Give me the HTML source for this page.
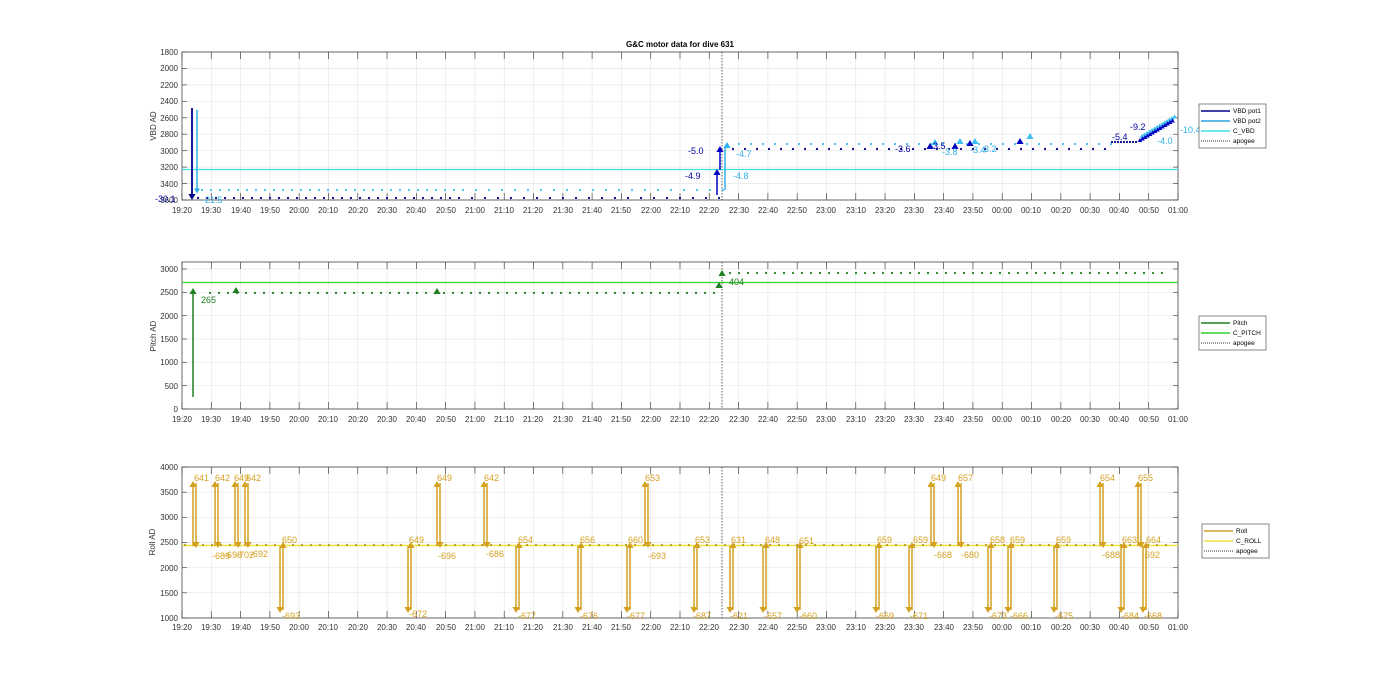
<!DOCTYPE html>
<html><head><meta charset="utf-8"><style>
body{margin:0;background:#fff;width:1400px;height:693px;overflow:hidden}
svg{font-family:"Liberation Sans",sans-serif}
.yl{font-size:8px;fill:#333;text-anchor:end}
.xl{font-size:8px;fill:#333;text-anchor:middle}
</style></head><body>
<svg id="s" width="1400" height="693" viewBox="0 0 1400 693">
<rect width="1400" height="693" fill="#fff"/>
<g id="grid"></g>
<g id="data"></g>
<text x="680" y="47" font-size="8" font-weight="bold" text-anchor="middle" fill="#000">G&amp;C motor data for dive 631</text>
<g class="yl">
<text x="178" y="55">1800</text><text x="178" y="71">2000</text><text x="178" y="88">2200</text><text x="178" y="104">2400</text><text x="178" y="121">2600</text><text x="178" y="137">2800</text><text x="178" y="154">3000</text><text x="178" y="170">3200</text><text x="178" y="187">3400</text><text x="178" y="203">3600</text>
<text x="178" y="272">3000</text><text x="178" y="295">2500</text><text x="178" y="319">2000</text><text x="178" y="342">1500</text><text x="178" y="365">1000</text><text x="178" y="389">500</text><text x="178" y="412">0</text>
<text x="178" y="470">4000</text><text x="178" y="495">3500</text><text x="178" y="520">3000</text><text x="178" y="545">2500</text><text x="178" y="571">2000</text><text x="178" y="596">1500</text><text x="178" y="621">1000</text>
</g>
<text transform="translate(156,126) rotate(-90)" font-size="8" text-anchor="middle" fill="#333">VBD AD</text>
<text transform="translate(156,336) rotate(-90)" font-size="8" text-anchor="middle" fill="#333">Pitch AD</text>
<text transform="translate(155,542) rotate(-90)" font-size="8" text-anchor="middle" fill="#333">Roll AD</text>
<g class="xl">
<text x="182" y="213">19:20</text><text x="211" y="213">19:30</text><text x="241" y="213">19:40</text><text x="270" y="213">19:50</text><text x="299" y="213">20:00</text><text x="328" y="213">20:10</text><text x="358" y="213">20:20</text><text x="387" y="213">20:30</text><text x="416" y="213">20:40</text><text x="446" y="213">20:50</text><text x="475" y="213">21:00</text><text x="504" y="213">21:10</text><text x="533" y="213">21:20</text><text x="563" y="213">21:30</text><text x="592" y="213">21:40</text><text x="621" y="213">21:50</text><text x="651" y="213">22:00</text><text x="680" y="213">22:10</text><text x="709" y="213">22:20</text><text x="739" y="213">22:30</text><text x="768" y="213">22:40</text><text x="797" y="213">22:50</text><text x="826" y="213">23:00</text><text x="856" y="213">23:10</text><text x="885" y="213">23:20</text><text x="914" y="213">23:30</text><text x="944" y="213">23:40</text><text x="973" y="213">23:50</text><text x="1002" y="213">00:00</text><text x="1031" y="213">00:10</text><text x="1061" y="213">00:20</text><text x="1090" y="213">00:30</text><text x="1119" y="213">00:40</text><text x="1149" y="213">00:50</text><text x="1178" y="213">01:00</text>
</g>
<g class="xl" transform="translate(0,209)">
<text x="182" y="213">19:20</text><text x="211" y="213">19:30</text><text x="241" y="213">19:40</text><text x="270" y="213">19:50</text><text x="299" y="213">20:00</text><text x="328" y="213">20:10</text><text x="358" y="213">20:20</text><text x="387" y="213">20:30</text><text x="416" y="213">20:40</text><text x="446" y="213">20:50</text><text x="475" y="213">21:00</text><text x="504" y="213">21:10</text><text x="533" y="213">21:20</text><text x="563" y="213">21:30</text><text x="592" y="213">21:40</text><text x="621" y="213">21:50</text><text x="651" y="213">22:00</text><text x="680" y="213">22:10</text><text x="709" y="213">22:20</text><text x="739" y="213">22:30</text><text x="768" y="213">22:40</text><text x="797" y="213">22:50</text><text x="826" y="213">23:00</text><text x="856" y="213">23:10</text><text x="885" y="213">23:20</text><text x="914" y="213">23:30</text><text x="944" y="213">23:40</text><text x="973" y="213">23:50</text><text x="1002" y="213">00:00</text><text x="1031" y="213">00:10</text><text x="1061" y="213">00:20</text><text x="1090" y="213">00:30</text><text x="1119" y="213">00:40</text><text x="1149" y="213">00:50</text><text x="1178" y="213">01:00</text>
</g>
<g class="xl" transform="translate(0,417)">
<text x="182" y="213">19:20</text><text x="211" y="213">19:30</text><text x="241" y="213">19:40</text><text x="270" y="213">19:50</text><text x="299" y="213">20:00</text><text x="328" y="213">20:10</text><text x="358" y="213">20:20</text><text x="387" y="213">20:30</text><text x="416" y="213">20:40</text><text x="446" y="213">20:50</text><text x="475" y="213">21:00</text><text x="504" y="213">21:10</text><text x="533" y="213">21:20</text><text x="563" y="213">21:30</text><text x="592" y="213">21:40</text><text x="621" y="213">21:50</text><text x="651" y="213">22:00</text><text x="680" y="213">22:10</text><text x="709" y="213">22:20</text><text x="739" y="213">22:30</text><text x="768" y="213">22:40</text><text x="797" y="213">22:50</text><text x="826" y="213">23:00</text><text x="856" y="213">23:10</text><text x="885" y="213">23:20</text><text x="914" y="213">23:30</text><text x="944" y="213">23:40</text><text x="973" y="213">23:50</text><text x="1002" y="213">00:00</text><text x="1031" y="213">00:10</text><text x="1061" y="213">00:20</text><text x="1090" y="213">00:30</text><text x="1119" y="213">00:40</text><text x="1149" y="213">00:50</text><text x="1178" y="213">01:00</text>
</g>
<g font-size="9">
<text x="155" y="202" fill="#0000a0">-30.1</text><text x="202" y="203" fill="#30b0e8">-21.5</text>
<text x="688" y="154" fill="#0000a0">-5.0</text><text x="685" y="179" fill="#0000a0">-4.9</text>
<text x="736" y="157" fill="#30b0e8">-4.7</text><text x="733" y="179" fill="#30b0e8">-4.8</text>
<text x="895" y="152" fill="#0000a0">-3.6</text><text x="930" y="149" fill="#0000a0">-3.5</text><text x="942" y="155" fill="#30b0e8">-3.8</text><text x="970" y="153" fill="#30b0e8">-3.4</text><text x="984" y="152" fill="#30b0e8">3.2</text>
<text x="1130" y="130" fill="#0000a0">-9.2</text><text x="1112" y="140" fill="#0000a0">-5.4</text><text x="1180" y="133" fill="#30b0e8">-10.4</text><text x="1157" y="144" fill="#30b0e8">-4.0</text>
<text x="201" y="303" fill="#208020">265</text><text x="729" y="285" fill="#208020">404</text>
</g>
<g font-size="9" fill="#d4a020">
<text x="194" y="481">641</text><text x="215" y="481">642</text><text x="234" y="481">649</text><text x="246" y="481">642</text>
<text x="212" y="559">-689</text><text x="224" y="558">-698</text><text x="236" y="558">-702</text><text x="250" y="557">-692</text>
<text x="282" y="543">650</text><text x="282" y="619">-693</text>
<text x="409" y="543">649</text><text x="409" y="617">-672</text><text x="437" y="481">649</text><text x="438" y="559">-696</text>
<text x="484" y="481">642</text><text x="486" y="557">-686</text><text x="518" y="543">654</text><text x="518" y="619">-677</text>
<text x="580" y="543">656</text><text x="580" y="619">-676</text><text x="628" y="543">660</text><text x="627" y="619">-677</text>
<text x="645" y="481">653</text><text x="648" y="559">-693</text><text x="695" y="543">653</text><text x="693" y="619">-687</text>
<text x="731" y="543">631</text><text x="730" y="619">-621</text><text x="765" y="543">648</text><text x="764" y="619">-657</text>
<text x="799" y="544">651</text><text x="799" y="619">-660</text><text x="877" y="543">659</text><text x="876" y="619">-669</text>
<text x="913" y="543">659</text><text x="910" y="619">-671</text><text x="931" y="481">649</text><text x="934" y="558">-668</text>
<text x="958" y="481">657</text><text x="961" y="558">-680</text><text x="990" y="543">658</text><text x="1010" y="543">659</text>
<text x="989" y="619">-673</text><text x="1010" y="619">-666</text><text x="1056" y="543">659</text><text x="1055" y="619">-675</text>
<text x="1100" y="481">654</text><text x="1102" y="558">-688</text><text x="1122" y="543">663</text><text x="1121" y="619">-684</text>
<text x="1138" y="481">655</text><text x="1142" y="558">-692</text><text x="1146" y="543">664</text><text x="1144" y="619">-668</text>
</g>
<g font-size="6.5" fill="#000">
<rect x="1199" y="104" width="67" height="44" fill="#fff" stroke="#555" stroke-width="0.7"/>
<line x1="1201" y1="111" x2="1230" y2="111" stroke="#00008b" stroke-width="1.5"/><text x="1233" y="113">VBD pot1</text>
<line x1="1201" y1="121" x2="1230" y2="121" stroke="#30a0e0" stroke-width="1.5"/><text x="1233" y="123">VBD pot2</text>
<line x1="1201" y1="131" x2="1230" y2="131" stroke="#40e0e8" stroke-width="1.5"/><text x="1233" y="133">C_VBD</text>
<line x1="1201" y1="141" x2="1230" y2="141" stroke="#333" stroke-dasharray="1,1"/><text x="1233" y="143">apogee</text>
<rect x="1199" y="316" width="67" height="34" fill="#fff" stroke="#555" stroke-width="0.7"/>
<line x1="1201" y1="323" x2="1230" y2="323" stroke="#208020" stroke-width="1.5"/><text x="1233" y="325">Pitch</text>
<line x1="1201" y1="333" x2="1230" y2="333" stroke="#30d030" stroke-width="1.5"/><text x="1233" y="335">C_PITCH</text>
<line x1="1201" y1="343" x2="1230" y2="343" stroke="#333" stroke-dasharray="1,1"/><text x="1233" y="345">apogee</text>
<rect x="1202" y="524" width="67" height="34" fill="#fff" stroke="#555" stroke-width="0.7"/>
<line x1="1204" y1="531" x2="1233" y2="531" stroke="#d4a020" stroke-width="1.5"/><text x="1236" y="533">Roll</text>
<line x1="1204" y1="541" x2="1233" y2="541" stroke="#f0e040" stroke-width="1.5"/><text x="1236" y="543">C_ROLL</text>
<line x1="1204" y1="551" x2="1233" y2="551" stroke="#333" stroke-dasharray="1,1"/><text x="1236" y="553">apogee</text>
</g>
</svg>
<script>
var NS="http://www.w3.org/2000/svg",G=document.getElementById('grid'),D=document.getElementById('data');
function el(p,t,a){var e=document.createElementNS(NS,t);for(var k in a)e.setAttribute(k,a[k]);p.appendChild(e);return e;}
function X(i){return 182+i*996/34;}
var axes=[[52,200],[262,409],[467,618]];
var ys=[[52,68.4,84.9,101.3,117.8,134.2,150.7,167.1,183.6,200],[269,292.3,315.7,339,362.3,385.7,409],[467,492.2,517.3,542.5,567.7,592.8,618]];
axes.forEach(function(a,k){
 for(var i=1;i<34;i++){el(G,'line',{x1:X(i),x2:X(i),y1:a[0],y2:a[1],stroke:'#e6e6e6','stroke-width':0.7});}
 ys[k].forEach(function(y){el(G,'line',{x1:182,x2:1178,y1:y,y2:y,stroke:'#e6e6e6','stroke-width':0.7});});
 el(G,'rect',{x:182,y:a[0],width:996,height:a[1]-a[0],fill:'none',stroke:'#444','stroke-width':0.8});
 for(var i=0;i<=34;i++){el(G,'line',{x1:X(i),x2:X(i),y1:a[1],y2:a[1]-7,stroke:'#444','stroke-width':0.7});el(G,'line',{x1:X(i),x2:X(i),y1:a[0],y2:a[0]+7,stroke:'#444','stroke-width':0.7});}
 ys[k].forEach(function(y){el(G,'line',{x1:182,x2:187,y1:y,y2:y,stroke:'#444','stroke-width':0.7});el(G,'line',{x1:1173,x2:1178,y1:y,y2:y,stroke:'#444','stroke-width':0.7});});
 el(D,'line',{x1:722,x2:722,y1:a[0],y2:a[1],stroke:'#333','stroke-width':0.8,'stroke-dasharray':'1.5,1.5'});
});
function dot(x,y,c,r){el(D,'circle',{cx:x,cy:y,r:r||1.1,fill:c});}
function tri(x,y,c,s,up){s=s||4;var d=up?('M'+(x-s/2*1.2)+','+(y+s/2)+'L'+(x+s/2*1.2)+','+(y+s/2)+'L'+x+','+(y-s/2)+'Z'):('M'+(x-s/2*1.2)+','+(y-s/2)+'L'+(x+s/2*1.2)+','+(y-s/2)+'L'+x+','+(y+s/2)+'Z');el(D,'path',{d:d,fill:c});}
function ln(x1,y1,x2,y2,c,w){el(D,'line',{x1:x1,y1:y1,x2:x2,y2:y2,stroke:c,'stroke-width':w||1.5});}
ln(182,169.5,1178,169.5,'#40e0e8',1.2);
ln(192,108,192,198,'#00008b',1.8);tri(192,197,'#00008b',6,false);
ln(197,110,197,192,'#30b0e8',1.5);tri(197,191,'#30b0e8',5,false);
for(var x=198;x<720;x+=9+(x>450?4:0)){dot(x,198,'#00008b');dot(x+4,190,'#40c0f0');}
ln(717,195,717,174,'#0000c0');tri(717,172,'#0000c0',6,true);ln(720,170,720,151,'#0000c0');tri(720,149,'#0000c0',6,true);
ln(725,190,725,147,'#30b0e8');tri(727,145,'#30b0e8',6,true);
for(var x=733;x<1110;x+=12){dot(x,149,'#00008b');dot(x+6,144,'#40c0f0');}
[[930,146],[955,146],[970,143],[1020,141]].forEach(function(p){tri(p[0],p[1],'#0000c0',6,true);});
[[935,142],[960,141],[975,141],[1030,136]].forEach(function(p){tri(p[0],p[1],'#40c0f0',6,true);});
for(var x=1112;x<1138;x+=3)dot(x,142,'#00008b');
for(var i=0;i<14;i++){tri(1140+i*2.5,140-i*1.5,'#0000c0',4,true);tri(1142+i*2.5,136-i*1.5,'#40c0f0',4,true);}
ln(182,282.5,1178,282.5,'#30d030',1.2);
ln(193,397,193,293,'#208020');tri(193,291,'#208020',6,true);
for(var x=210;x<715;x+=9)dot(x,293,'#208020');
tri(236,290,'#208020',6,true);tri(437,291,'#208020',6,true);
ln(719,288,719,283,'#208020');tri(719,285,'#208020',6,true);tri(722,273,'#208020',6,true);
for(var x=730;x<1168;x+=9)dot(x,273,'#208020');
ln(182,545.5,1178,545.5,'#f0e040',1.6);
for(var x=185;x<1175;x+=9)dot(x,545,'#b89a20',1.1);
var ups=[193,215,235,245,437,484,645,931,958,1100,1138];
ups.forEach(function(x){ln(x,546,x,485,'#d4a020');tri(x,484,'#d4a020',6,true);ln(x+3,483,x+3,545,'#d4a020');tri(x+3,545,'#d4a020',6,false);});
var downs=[280,408,516,578,627,694,730,763,797,876,909,988,1008,1054,1121,1143];
downs.forEach(function(x){ln(x,546,x,610,'#d4a020');tri(x,610,'#d4a020',6,false);ln(x+3,610,x+3,546,'#d4a020');tri(x+3,545,'#d4a020',6,true);});
</script>
</body></html>
